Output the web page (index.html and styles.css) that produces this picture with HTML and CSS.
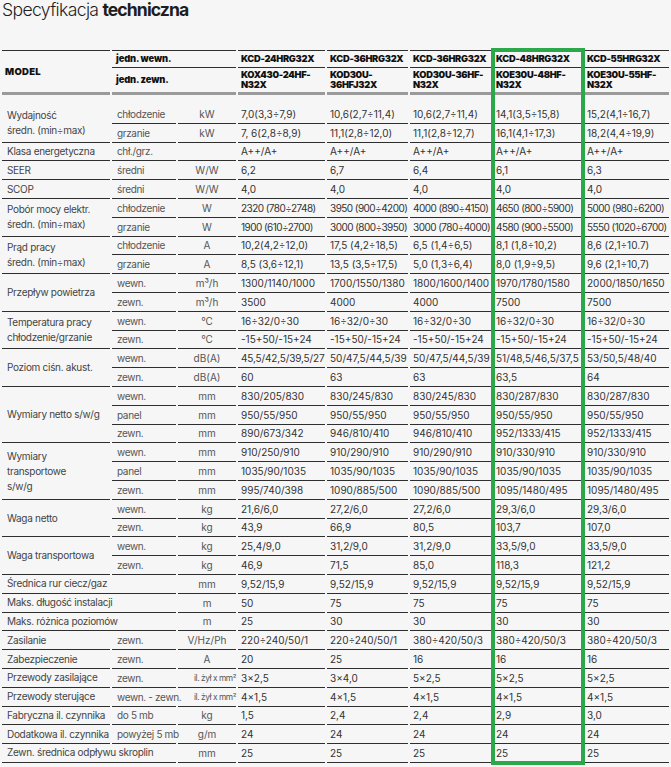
FILE: index.html
```html
<!DOCTYPE html>
<html lang="pl">
<head>
<meta charset="utf-8">
<title>Specyfikacja techniczna</title>
<link rel="stylesheet" href="styles.css">
</head>
<body>
<h1 class="title"><span class="light">Specyfikacja</span><b>techniczna</b></h1>
<div class="sheet">
<table class="spec">
<colgroup>
<col class="c-label"><col class="c-sub"><col class="c-unit">
<col class="c-v1"><col class="c-v2"><col class="c-v3"><col class="c-v4"><col class="c-v5">
</colgroup>
<thead>
<tr class="hr1">
<th rowspan="2" class="model">MODEL</th>
<th colspan="2" class="hsub">jedn. wewn.</th>
<th>KCD-24HRG32X</th><th>KCD-36HRG32X</th><th>KCD-36HRG32X</th><th>KCD-48HRG32X</th><th>KCD-55HRG32X</th>
</tr>
<tr class="hr2">
<th colspan="2" class="hsub">jedn. zewn.</th>
<th>KOX430-24HF-<br>N32X</th><th>KOD30U-<br>36HFJ32X</th><th>KOD30U-36HF-<br>N32X</th><th>KOE30U-48HF-<br>N32X</th><th>KOE30U-55HF-<br>N32X</th>
</tr>
</thead>
<tbody>
<tr class="spacer"><td colspan="8"></td></tr>

<tr><td rowspan="2" class="label">Wydajność<br>średn. (min÷max)</td><td class="sub">chłodzenie</td><td class="unit">kW</td><td>7,0(3,3÷7,9)</td><td>10,6(2,7÷11,4)</td><td>10,6(2,7÷11,4)</td><td>14,1(3,5÷15,8)</td><td>15,2(4,1÷16,7)</td></tr>
<tr><td class="sub">grzanie</td><td class="unit">kW</td><td>7, 6(2,8÷8,9)</td><td>11,1(2,8÷12,0)</td><td>11,1(2,8÷12,7)</td><td>16,1(4,1÷17,3)</td><td>18,2(4,4÷19,9)</td></tr>

<tr><td class="label">Klasa energetyczna</td><td class="sub">chł./grz.</td><td class="unit"></td><td>A++/A+</td><td>A++/A+</td><td>A++/A+</td><td>A++/A+</td><td>A++/A+</td></tr>
<tr><td class="label">SEER</td><td class="sub">średni</td><td class="unit">W/W</td><td>6,2</td><td>6,7</td><td>6,4</td><td>6,1</td><td>6,3</td></tr>
<tr><td class="label">SCOP</td><td class="sub">średni</td><td class="unit">W/W</td><td>4,0</td><td>4,0</td><td>4,0</td><td>4,0</td><td>4,0</td></tr>

<tr class="tight"><td rowspan="2" class="label">Pobór mocy elektr.<br>średn. (min÷max)</td><td class="sub">chłodzenie</td><td class="unit">W</td><td>2320 (780÷2748)</td><td>3950 (900÷4200)</td><td>4000 (890÷4150)</td><td>4650 (800÷5900)</td><td>5000 (980÷6200)</td></tr>
<tr class="tight"><td class="sub">grzanie</td><td class="unit">W</td><td>1900 (610÷2700)</td><td>3000 (800÷3950)</td><td>3000 (780÷4000)</td><td>4580 (900÷5500)</td><td>5550 (1020÷6700)</td></tr>

<tr><td rowspan="2" class="label">Prąd pracy<br>średn. (min÷max)</td><td class="sub">chłodzenie</td><td class="unit">A</td><td>10,2(4,2÷12,0)</td><td>17,5 (4,2÷18,5)</td><td>6,5 (1,4÷6,5)</td><td>8,1 (1,8÷10,2)</td><td>8,6 (2,1÷10.7)</td></tr>
<tr><td class="sub">grzanie</td><td class="unit">A</td><td>8,5 (3,6÷12,1)</td><td>13,5 (3,5÷17,5)</td><td>5,0 (1,3÷6,4)</td><td>8,0 (1,9÷9,5)</td><td>9,6 (2,1÷10,7)</td></tr>

<tr><td rowspan="2" class="label">Przepływ powietrza</td><td class="sub">wewn.</td><td class="unit">m³/h</td><td>1300/1140/1000</td><td>1700/1550/1380</td><td>1800/1600/1400</td><td>1970/1780/1580</td><td>2000/1850/1650</td></tr>
<tr><td class="sub">zewn.</td><td class="unit">m³/h</td><td>3500</td><td>4000</td><td>4000</td><td>7500</td><td>7500</td></tr>

<tr><td rowspan="2" class="label">Temperatura pracy<br>chłodzenie/grzanie</td><td class="sub">wewn.</td><td class="unit">°C</td><td>16÷32/0÷30</td><td>16÷32/0÷30</td><td>16÷32/0÷30</td><td>16÷32/0÷30</td><td>16÷32/0÷30</td></tr>
<tr><td class="sub">zewn.</td><td class="unit">°C</td><td>-15+50/-15+24</td><td>-15+50/-15+24</td><td>-15+50/-15+24</td><td>-15+50/-15+24</td><td>-15+50/-15+24</td></tr>

<tr><td rowspan="2" class="label">Poziom ciśn. akust.</td><td class="sub">wewn.</td><td class="unit">dB(A)</td><td class="narrow">45,5/42,5/39,5/27</td><td>50/47,5/44,5/39</td><td>50/47,5/44,5/39</td><td>51/48,5/46,5/37,5</td><td>53/50,5/48/40</td></tr>
<tr><td class="sub">zewn.</td><td class="unit">dB(A)</td><td>60</td><td>63</td><td>63</td><td>63,5</td><td>64</td></tr>

<tr><td rowspan="3" class="label">Wymiary netto s/w/g</td><td class="sub">wewn.</td><td class="unit">mm</td><td>830/205/830</td><td>830/245/830</td><td>830/245/830</td><td>830/287/830</td><td>830/287/830</td></tr>
<tr><td class="sub">panel</td><td class="unit">mm</td><td>950/55/950</td><td>950/55/950</td><td>950/55/950</td><td>950/55/950</td><td>950/55/950</td></tr>
<tr><td class="sub">zewn.</td><td class="unit">mm</td><td>890/673/342</td><td>946/810/410</td><td>946/810/410</td><td>952/1333/415</td><td>952/1333/415</td></tr>

<tr><td rowspan="3" class="label">Wymiary<br>transportowe<br>s/w/g</td><td class="sub">wewn.</td><td class="unit">mm</td><td>910/250/910</td><td>910/290/910</td><td>910/290/910</td><td>910/330/910</td><td>910/330/910</td></tr>
<tr><td class="sub">panel</td><td class="unit">mm</td><td>1035/90/1035</td><td>1035/90/1035</td><td>1035/90/1035</td><td>1035/90/1035</td><td>1035/90/1035</td></tr>
<tr><td class="sub">zewn.</td><td class="unit">mm</td><td>995/740/398</td><td>1090/885/500</td><td>1090/885/500</td><td>1095/1480/495</td><td>1095/1480/495</td></tr>

<tr><td rowspan="2" class="label">Waga netto</td><td class="sub">wewn.</td><td class="unit">kg</td><td>21,6/6,0</td><td>27,2/6,0</td><td>27,2/6,0</td><td>29,3/6,0</td><td>29,3/6,0</td></tr>
<tr><td class="sub">zewn.</td><td class="unit">kg</td><td>43,9</td><td>66,9</td><td>80,5</td><td>103,7</td><td>107,0</td></tr>

<tr><td rowspan="2" class="label">Waga transportowa</td><td class="sub">wewn.</td><td class="unit">kg</td><td>25,4/9,0</td><td>31,2/9,0</td><td>31,2/9,0</td><td>33,5/9,0</td><td>33,5/9,0</td></tr>
<tr><td class="sub">zewn.</td><td class="unit">kg</td><td>46,9</td><td>71,5</td><td>85,0</td><td>118,3</td><td>121,2</td></tr>

<tr><td colspan="2" class="label">Średnica rur ciecz/gaz</td><td class="unit">mm</td><td>9,52/15,9</td><td>9,52/15,9</td><td>9,52/15,9</td><td>9,52/15,9</td><td>9,52/15,9</td></tr>
<tr><td colspan="2" class="label">Maks. długość instalacji</td><td class="unit">m</td><td>50</td><td>75</td><td>75</td><td>75</td><td>75</td></tr>
<tr><td colspan="2" class="label">Maks. różnica poziomów</td><td class="unit">m</td><td>25</td><td>30</td><td>30</td><td>30</td><td>30</td></tr>
<tr><td class="label">Zasilanie</td><td class="sub">zewn.</td><td class="unit">V/Hz/Ph</td><td>220÷240/50/1</td><td>220÷240/50/1</td><td>380÷420/50/3</td><td>380÷420/50/3</td><td>380÷420/50/3</td></tr>
<tr><td class="label">Zabezpieczenie</td><td class="sub">zewn.</td><td class="unit">A</td><td>20</td><td>25</td><td>16</td><td>16</td><td>16</td></tr>
<tr><td class="label">Przewody zasilające</td><td class="sub">zewn.</td><td class="unit small">il. żył x mm²</td><td>3x2,5</td><td>3x4,0</td><td>5x2,5</td><td>5x2,5</td><td>5x2,5</td></tr>
<tr><td class="label">Przewody sterujące</td><td class="sub">wewn. - zewn.</td><td class="unit small">il. żył x mm²</td><td>4x1,5</td><td>4x1,5</td><td>4x1,5</td><td>4x1,5</td><td>4x1,5</td></tr>
<tr><td class="label">Fabryczna il. czynnika</td><td class="sub">do 5 mb</td><td class="unit">kg</td><td>1,5</td><td>2,4</td><td>2,4</td><td>2,9</td><td>3,0</td></tr>
<tr><td class="label">Dodatkowa il. czynnika</td><td class="sub">powyżej 5 mb</td><td class="unit">g/m</td><td>24</td><td>24</td><td>24</td><td>24</td><td>24</td></tr>
<tr><td colspan="2" class="label">Zewn. średnica odpływu skroplin</td><td class="unit">mm</td><td>25</td><td>25</td><td>25</td><td>25</td><td>25</td></tr>
</tbody>
</table>
<div class="highlight"></div>
</div>
</body>
</html>
```
FILE: styles.css
```css
* { box-sizing: border-box; }
html, body { margin: 0; padding: 0; background: #f6f6f6; }
body {
  width: 671px;
  height: 767px;
  overflow: hidden;
  font-family: Inter, "Noto Sans", sans-serif;
  color: #3a3a3a;
}
.title {
  margin: 0;
  padding: 1px 0 0 2px;
  font-size: 17.6px;
  line-height: 18px;
  height: 18px;
  font-weight: 300;
  color: #1e1e1e;
  letter-spacing: -0.65px;
}
.title b {
  margin-left: 4px;
  font-weight: 700;
  letter-spacing: -0.9px;
}

.sheet { position: relative; margin-top: 32px; }

.spec {
  width: 671px;
  table-layout: fixed;
  border-collapse: separate;
  border-spacing: 2px 0;
  font-size: 10px;
}
.c-label { width: 108px; }
.c-sub { width: 64px; }
.c-unit { width: 58px; }
.c-v1 { width: 87px; }
.c-v2 { width: 81px; }
.c-v3 { width: 81px; }
.c-v4 { width: 89px; }
.c-v5 { width: 85px; }

.spec th, .spec td {
  padding: 0 3px;
  text-align: left;
  vertical-align: middle;
  white-space: nowrap;
  border-bottom: 1px solid #2e2e2e;
}

.spec th {
  font-size: 9.3px;
  line-height: 10px;
  font-weight: 900;
  color: #111;
  letter-spacing: -0.3px;
}
.spec th.model { font-size: 9.5px; letter-spacing: 0.3px; }
.hr1 { height: 18px; }
.hr1 th { border-top: 1px solid #2e2e2e; }
.hr2 { height: 27px; }
.hr2 th, .spec th.model { border-bottom: 3px solid #9a9a9a; }
.spec th.hsub { padding-left: 4px; letter-spacing: -0.1px; }

.spacer { height: 10px; }
.spacer td { border: 0; padding: 0; height: 10px; }

tbody tr { height: 18.8px; }
.spec td { line-height: 12px; color: #333; }
.spec td.label {
  padding-left: 5px;
  line-height: 15px;
  color: #444;
  letter-spacing: -0.3px;
}
.spec td.sub { padding-left: 5px; color: #555; letter-spacing: -0.35px; }
.spec td.unit { text-align: center; color: #555; padding: 0 1px; }
.spec td.small {
  font-size: 8.4px;
  letter-spacing: -0.45px;
  text-align: right;
  padding-right: 0;
}
.spec td.narrow { letter-spacing: -0.15px; }
.tight td { letter-spacing: -0.55px; }
.tight td.label { letter-spacing: -0.3px; }
.tight td.sub { letter-spacing: -0.35px; }
.tight td.unit { letter-spacing: 0; }

.highlight {
  position: absolute;
  left: 491px;
  top: -2px;
  width: 94px;
  height: 717px;
  border: 4px solid #2ba84a;
  pointer-events: none;
}
```
